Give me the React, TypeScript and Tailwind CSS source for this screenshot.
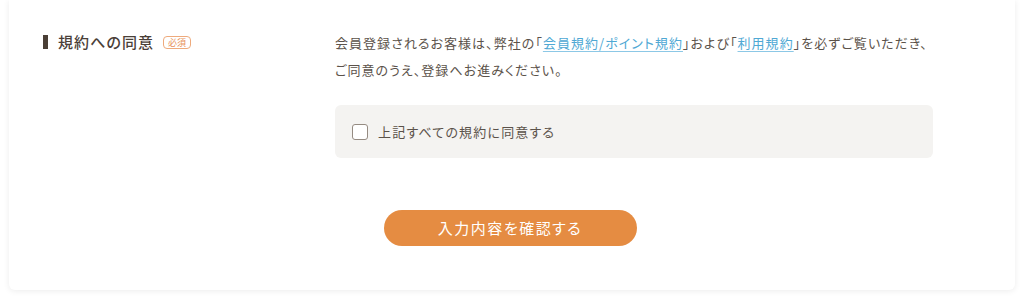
import React from "react";

export default function App() {
  return (
    <div
      className="w-[1024px] h-[297px] bg-white overflow-hidden px-[9px] [font-feature-settings:'palt']"
      style={{ fontFamily: '"Noto Sans CJK JP", "Noto Sans", sans-serif' }}
    >
      <div className="bg-white rounded-b-[6px] shadow-[0_1px_6px_rgba(0,0,0,0.08)] pt-[29px] pb-[44px]">
        <div className="flex">
          <div className="w-[326px] pl-[34px] flex items-start pt-[3px]">
            <div className="flex items-center h-[20px]">
              <span className="w-[5px] h-[14px] bg-[#4a3f36] mr-[10px]" />
              <span className="text-[15px] font-medium text-[#4a4038] tracking-[0.07em]">規約への同意</span>
              <span className="ml-[9px] h-[13px] px-[4px] border border-[#eeaa7c] rounded-[4px] text-[#e8925a] text-[9px] leading-[11px] flex items-center">
                必須
              </span>
            </div>
          </div>
          <div className="w-[598px]">
            <p className="text-[13px] leading-[27px] text-[#5b524a] tracking-[0.08em]">
              <span className="block whitespace-nowrap">
                会員登録されるお客様は、弊社の「
                <a className="text-[#4fa8d4] underline underline-offset-[3px] decoration-[#8cc8e6]">会員規約/ポイント規約</a>
                」および「
                <a className="text-[#4fa8d4] underline underline-offset-[3px] decoration-[#8cc8e6]">利用規約</a>
                」を必ずご覧いただき、
              </span>
              <span className="block whitespace-nowrap">ご同意のうえ、登録へお進みください。</span>
            </p>
            <div className="mt-[22px] h-[53px] bg-[#f4f3f1] rounded-[6px] flex items-center pl-[17px]">
              <span className="w-[16px] h-[16px] border-[1.5px] border-[#958b82] rounded-[3px] bg-white" />
              <span className="ml-[10px] text-[13px] text-[#5b524a] tracking-[0.09em]">上記すべての規約に同意する</span>
            </div>
          </div>
        </div>
        <div className="flex justify-center mt-[52px] pr-[4px]">
          <button className="w-[253px] h-[36px] rounded-full bg-[#e58c42] text-white text-[15px] tracking-[0.1em]">
            入力内容を確認する
          </button>
        </div>
      </div>
    </div>
  );
}
